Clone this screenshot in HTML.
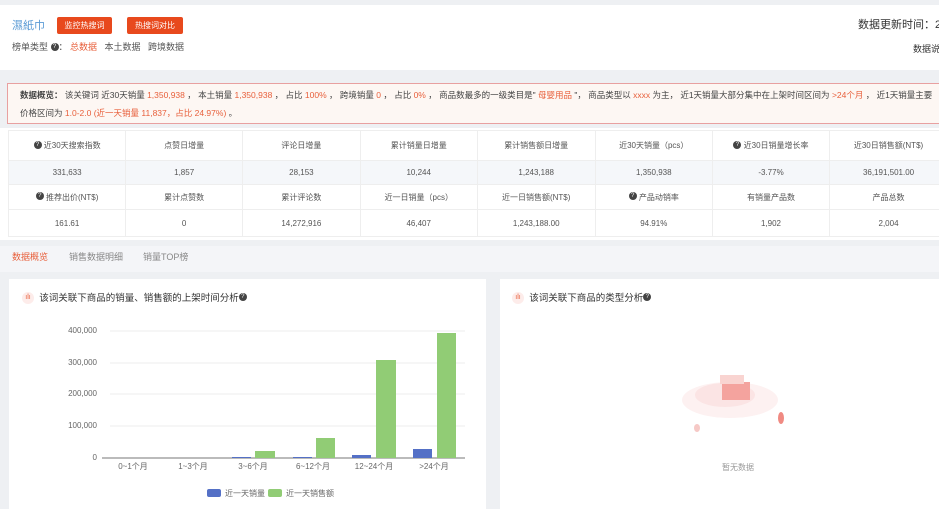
<!DOCTYPE html><html><head><meta charset="utf-8"><style>
*{margin:0;padding:0;box-sizing:border-box}
body{width:939px;height:500px;overflow:hidden;background:#eef0f3;font-family:"Liberation Sans","Noto Sans CJK SC",sans-serif;color:#333;position:relative}
.a{position:absolute}
.btn{position:absolute;background:#e8491d;color:#fff;font-size:8px;height:17px;line-height:17px;text-align:center;border-radius:2px}
.r{color:#e8603c}
table{border-collapse:collapse;position:absolute;left:8px;top:130px;width:940px;font-size:8px;color:#555;background:#fff}
td{border:1px solid #eee;text-align:center;width:120px}
.q{display:inline-block;width:8px;height:8px;border-radius:50%;background:#444;color:#fff;font-size:6px;line-height:8px;text-align:center;vertical-align:middle;position:relative;top:-1px}
.ic{display:inline-block;width:12px;height:12px;border-radius:50%;background:#fdecea;color:#e8603c;font-size:7px;line-height:12px;text-align:center;vertical-align:middle}
</style></head><body>
<div class="a" style="left:0;top:5px;width:939px;height:65px;background:#fff"></div>
<div class="a" style="left:12px;top:17px;font-size:11px;color:#5b9bd5">濕紙巾</div>
<div class="btn" style="left:57px;top:17px;width:55px">监控热搜词</div>
<div class="btn" style="left:127px;top:17px;width:56px">热搜词对比</div>
<div class="a" style="left:12px;top:42px;font-size:9px;color:#555;line-height:11px">榜单类型 <span class="q">?</span>： <span class="r">总数据</span>&nbsp;&nbsp; 本土数据&nbsp;&nbsp; 跨境数据</div>
<div class="a" style="left:858px;top:16px;font-size:11px;white-space:nowrap">数据更新时间：2024</div>
<div class="a" style="left:913px;top:42px;font-size:9px;white-space:nowrap">数据说明</div>
<div class="a" style="left:7px;top:83px;width:940px;height:41px;background:#fdf7f3;border:1px solid #e8a0a0;border-right:none;font-size:8.5px;line-height:18px;padding:2px 12px;white-space:nowrap;color:#444">
<b>数据概览：</b> 该关键词 近30天销量 <span class="r">1,350,938</span> ， 本土销量 <span class="r">1,350,938</span> ， 占比 <span class="r">100%</span> ， 跨境销量 <span class="r">0</span> ， 占比 <span class="r">0%</span> ， 商品数最多的一级类目是" <span class="r">母婴用品</span> "， 商品类型以 <span class="r">xxxx</span> 为主， 近1天销量大部分集中在上架时间区间为 <span class="r">&gt;24个月</span> ， 近1天销量主要<br>价格区间为 <span class="r">1.0-2.0 (近一天销量 11,837，占比 24.97%)</span> 。</div>
<div class="a" style="left:0;top:128px;width:939px;height:112px;background:#fff"></div>
<table>
<tr style="height:30px"><td><span class="q">?</span> 近30天搜索指数</td><td>点赞日增量</td><td>评论日增量</td><td>累计销量日增量</td><td>累计销售额日增量</td><td>近30天销量（pcs）</td><td><span class="q">?</span> 近30日销量增长率</td><td>近30日销售额(NT$)</td></tr>
<tr style="height:24px;background:#f5f7fa"><td>331,633</td><td>1,857</td><td>28,153</td><td>10,244</td><td>1,243,188</td><td>1,350,938</td><td>-3.77%</td><td>36,191,501.00</td></tr>
<tr style="height:25px"><td><span class="q">?</span> 推荐出价(NT$)</td><td>累计点赞数</td><td>累计评论数</td><td>近一日销量（pcs）</td><td>近一日销售额(NT$)</td><td><span class="q">?</span> 产品动销率</td><td>有销量产品数</td><td>产品总数</td></tr>
<tr style="height:27px"><td>161.61</td><td>0</td><td>14,272,916</td><td>46,407</td><td>1,243,188.00</td><td>94.91%</td><td>1,902</td><td>2,004</td></tr>
</table>
<div class="a" style="left:0;top:246px;width:939px;height:26px;background:#f4f5f8;font-size:9px;color:#888;line-height:22px"><span style="position:absolute;left:12px;color:#e8603c">数据概览</span><span style="position:absolute;left:69px">销售数据明细</span><span style="position:absolute;left:143px">销量TOP榜</span></div>
<div class="a" style="left:9px;top:279px;width:477px;height:230px;background:#fff"></div>
<div class="a" style="left:500px;top:279px;width:439px;height:230px;background:#fff"></div>
<div class="a" style="left:22px;top:292px;font-size:9.5px;color:#333;line-height:13px"><span class="ic">ılı</span>&nbsp; 该词关联下商品的销量、销售额的上架时间分析<span class="q">?</span></div>
<div class="a" style="left:512px;top:292px;font-size:9.5px;color:#333;line-height:13px"><span class="ic">ılı</span>&nbsp; 该词关联下商品的类型分析<span class="q">?</span></div>
<svg class="a" style="left:0;top:280px" width="490" height="220" font-family="Liberation Sans,Noto Sans CJK SC,sans-serif" font-size="8" fill="#666">
<g stroke="#eee"><line x1="110" y1="51" x2="465" y2="51"/><line x1="110" y1="83" x2="465" y2="83"/><line x1="110" y1="114" x2="465" y2="114"/><line x1="110" y1="146" x2="465" y2="146"/></g>
<line x1="102" y1="178" x2="465" y2="178" stroke="#777"/>
<g text-anchor="end"><text x="97" y="53">400,000</text><text x="97" y="85">300,000</text><text x="97" y="116">200,000</text><text x="97" y="148">100,000</text><text x="97" y="180">0</text></g>
<g text-anchor="middle"><text x="133" y="189">0~1个月</text><text x="193" y="189">1~3个月</text><text x="253" y="189">3~6个月</text><text x="313" y="189">6~12个月</text><text x="374" y="189">12~24个月</text><text x="434" y="189">&gt;24个月</text></g>
<g fill="#5470c6"><rect x="232" y="177" width="19" height="1"/><rect x="293" y="177" width="19" height="1"/><rect x="352" y="175" width="19" height="3"/><rect x="413" y="169" width="19" height="9"/></g>
<g fill="#91cc75"><rect x="255" y="171" width="20" height="7"/><rect x="316" y="158" width="19" height="20"/><rect x="376" y="80" width="20" height="98"/><rect x="437" y="53" width="19" height="125"/></g>
<rect x="207" y="209" width="14" height="8" rx="2" fill="#5470c6"/><text x="225" y="216">近一天销量</text>
<rect x="268" y="209" width="14" height="8" rx="2" fill="#91cc75"/><text x="286" y="216">近一天销售额</text>
</svg>
<svg class="a" style="left:670px;top:350px" width="120" height="90">
<ellipse cx="60" cy="50" rx="48" ry="18" fill="#fdf1f1"/>
<ellipse cx="55" cy="45" rx="30" ry="12" fill="#fbe4e4"/>
<rect x="52" y="32" width="28" height="18" fill="#f4a39e"/><rect x="50" y="25" width="24" height="9" fill="#f9d4d1"/>
<ellipse cx="111" cy="68" rx="3" ry="6" fill="#f08a82"/>
<ellipse cx="27" cy="78" rx="3" ry="4" fill="#f6c9c6"/>
</svg>
<div class="a" style="left:722px;top:462px;font-size:8px;color:#999">暂无数据</div>
</body></html>
